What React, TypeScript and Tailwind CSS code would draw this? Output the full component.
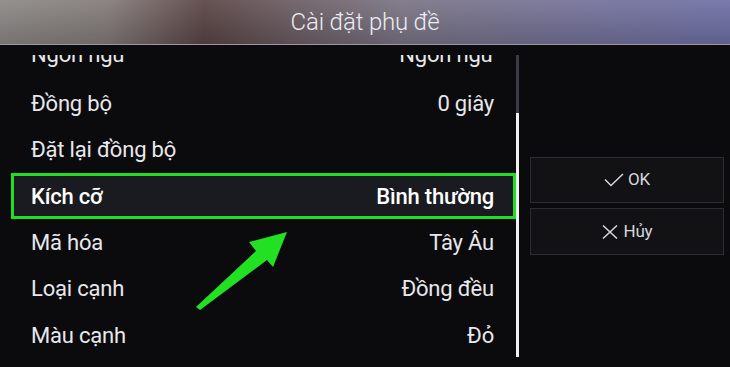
import React from 'react';

const rows: { label: string; value: string; active?: boolean }[] = [
  { label: 'Đồng bộ', value: '0 giây' },
  { label: 'Đặt lại đồng bộ', value: '' },
  { label: 'Kích cỡ', value: 'Bình thường', active: true },
  { label: 'Mã hóa', value: 'Tây Âu' },
  { label: 'Loại cạnh', value: 'Đồng đều' },
  { label: 'Màu cạnh', value: 'Đỏ' },
];

const Row: React.FC<{ label: string; value: string; active?: boolean }> = ({ label, value, active }) =>
  active ? (
    <div className="ml-[11px] h-[46px] flex items-center justify-between border-[3px] border-[#22dd22] bg-[#1a1b20] pl-[17px] pr-[19px] text-[22px] font-medium text-white">
      <span>{label}</span>
      <span>{value}</span>
    </div>
  ) : (
    <div className="h-[46.4px] flex items-center justify-between pl-[31px] pr-[22px] text-[22px] text-[#e8e8ec]">
      <span>{label}</span>
      <span>{value}</span>
    </div>
  );

export default function App() {
  return (
    <div
      className="relative w-[730px] h-[367px] overflow-hidden bg-[#0b0b0d] tracking-[-0.2px]"
      style={{ fontFamily: 'Roboto, "Noto Sans", sans-serif' }}
    >
      <div className="relative h-[45px] flex items-center justify-center bg-[linear-gradient(90deg,#8c8886_0%,#827a78_15%,#5a4444_28%,#6a5c62_40%,#7a7484_55%,#757296_75%,#6f70a6_100%)] border-b border-[#9c98a4]">
        <div className="absolute inset-0 bg-[linear-gradient(180deg,rgba(255,255,255,0.08),rgba(0,0,0,0.15))]" />
        <span className="relative text-[24px] font-light text-[#ecebf2]">Cài đặt phụ đề</span>
      </div>

      <div className="flex h-[322px]">
        <div className="w-[516px] pt-[10px]">
          <div className="h-[312px] overflow-hidden">
            <div className="-mt-[24px] mb-[3px] h-[46.4px] flex items-center justify-between pl-[31px] pr-[22px] text-[22px] text-[#e8e8ec]">
              <span>Ngôn ngữ</span>
              <span>Ngôn ngữ</span>
            </div>
            {rows.map(r => (
              <Row key={r.label} {...r} />
            ))}
          </div>
        </div>

        <div className="w-[3px] pt-[10px] flex flex-col">
          <div className="h-[58px] bg-[#3a3a44]" />
          <div className="h-[244px] bg-[#f2f2f4]" />
        </div>

        <div className="flex-1 pl-[11px] pt-[112px] flex flex-col gap-[5px]">
          <div className="w-[194px] h-[46px] flex items-center justify-center gap-1 bg-[#121215] border border-[#2c2c32] text-[17px] text-[#d6d6de]">
            <svg width="20" height="14" viewBox="0 0 20 14" fill="none" stroke="#d6d6de" strokeWidth="1.5">
              <path d="M1 6.5 L7 12.5 L19 1" />
            </svg>
            <span>OK</span>
          </div>
          <div className="w-[194px] h-[47px] flex items-center justify-center gap-1.5 bg-[#121215] border border-[#2c2c32] text-[17px] text-[#d6d6de]">
            <svg width="16" height="14" viewBox="0 0 16 14" fill="none" stroke="#d6d6de" strokeWidth="1.5">
              <path d="M1 0.5 L15 13.5 M15 0.5 L1 13.5" />
            </svg>
            <span>Hủy</span>
          </div>
        </div>
      </div>

      <svg className="absolute left-0 top-0 pointer-events-none" width="730" height="367" viewBox="0 0 730 367">
        <polygon
          points="196,307 256,251 249,242 287,232 273,267 267,260 200,310"
          fill="#22e022"
        />
      </svg>
    </div>
  );
}
